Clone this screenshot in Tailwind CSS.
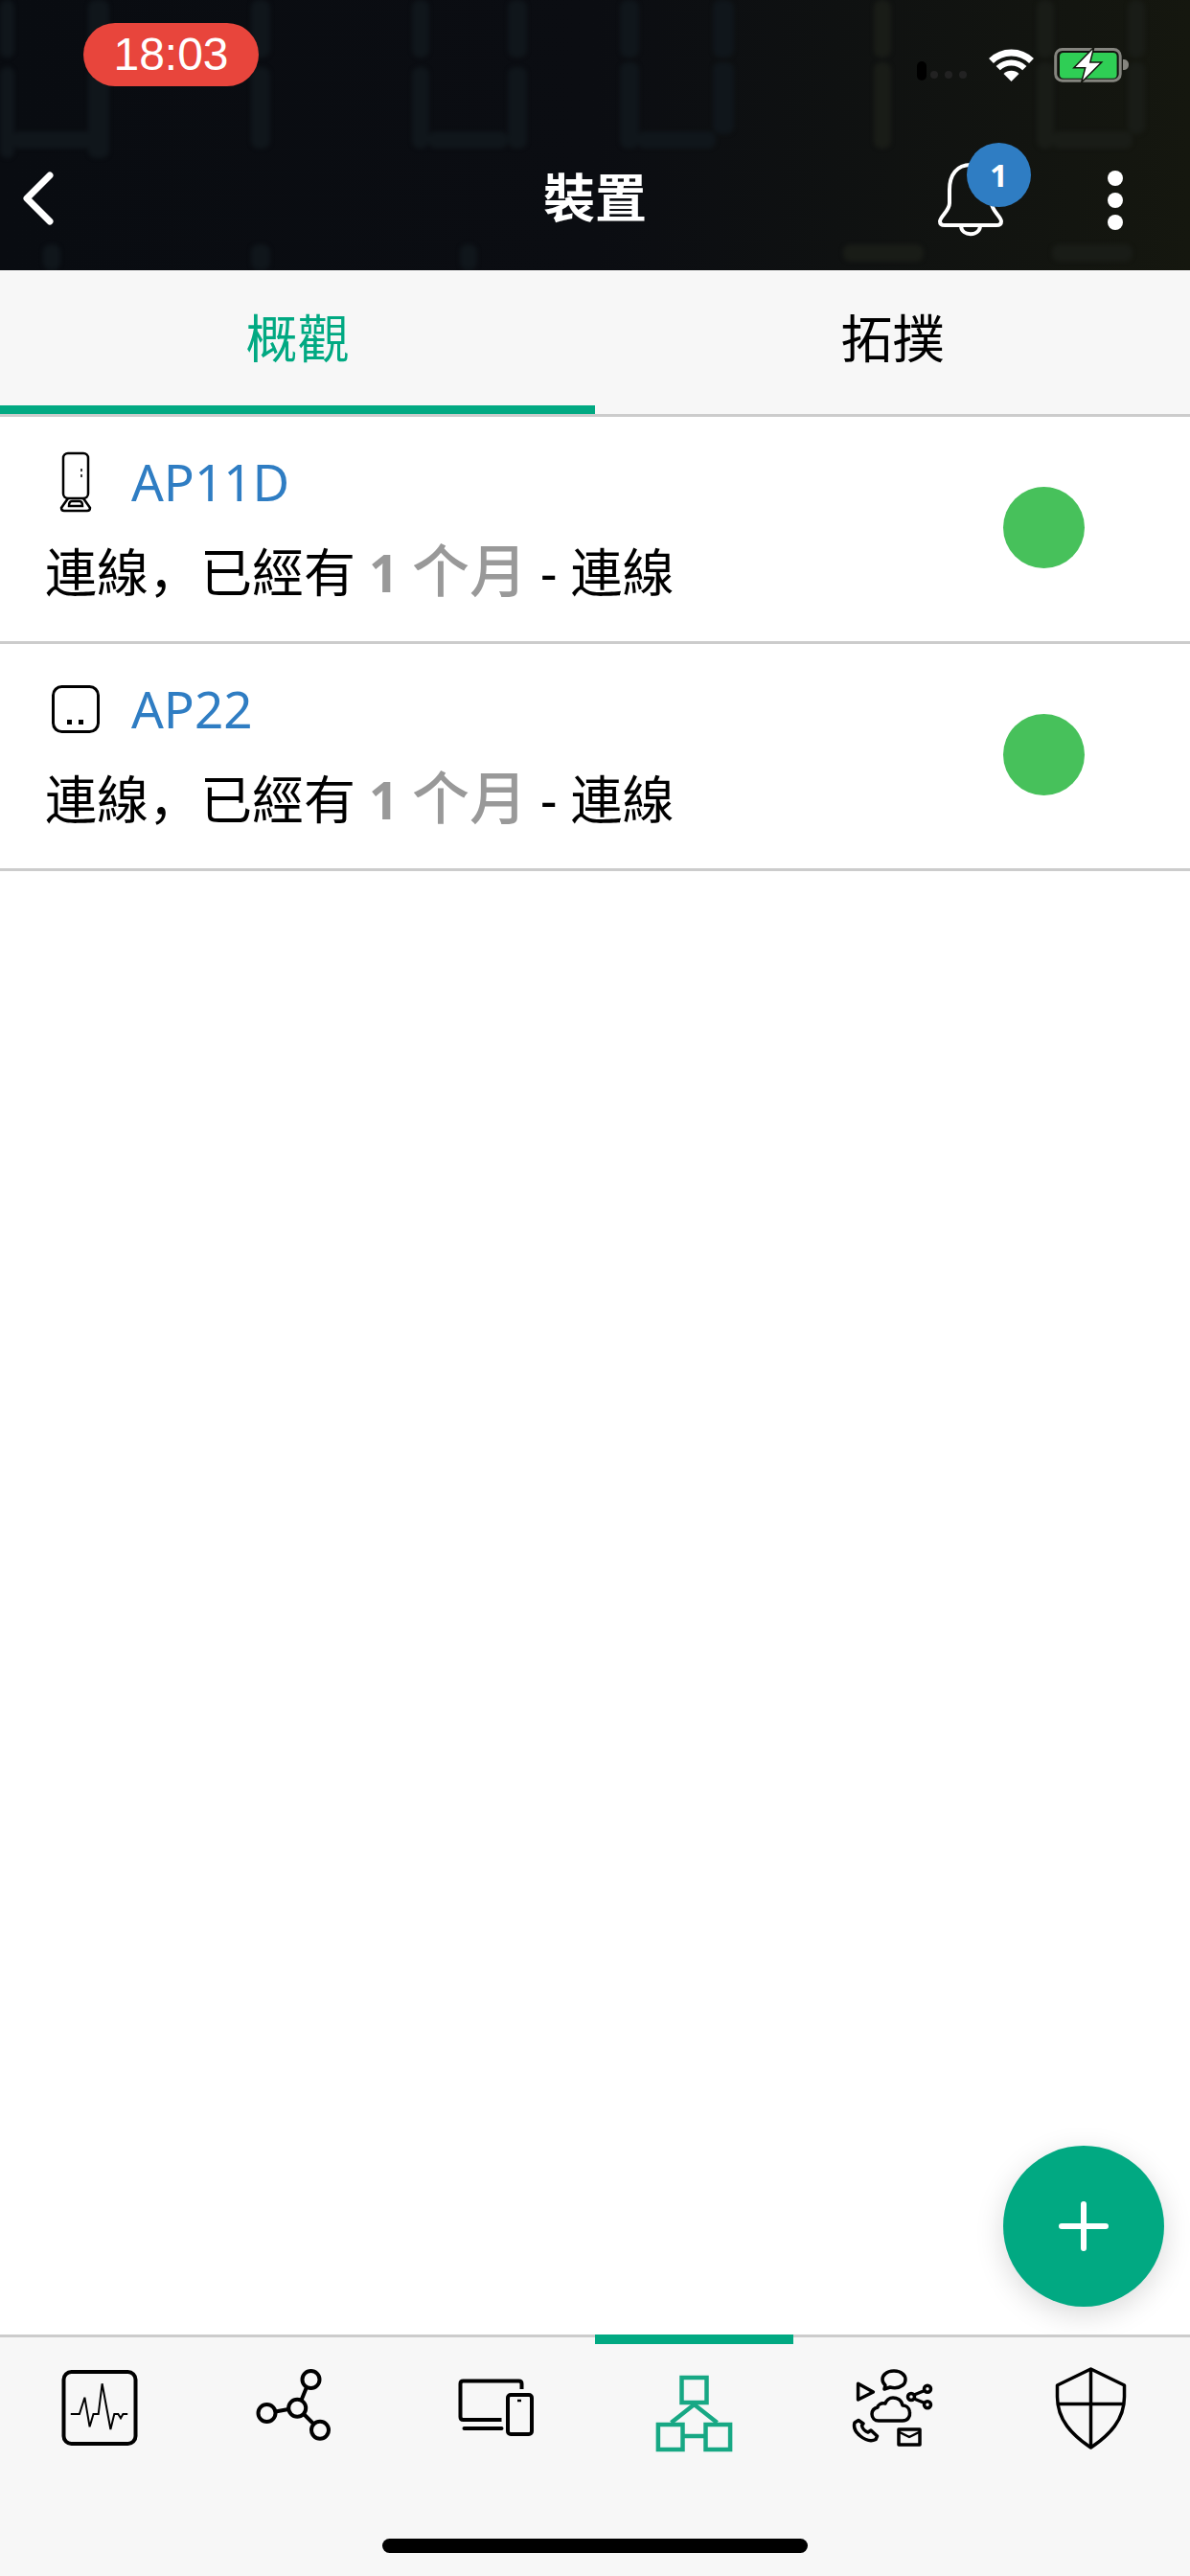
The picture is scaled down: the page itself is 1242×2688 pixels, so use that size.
<!DOCTYPE html>
<html lang="zh-CN">
<head>
<meta charset="UTF-8">
<meta name="viewport" content="width=device-width, initial-scale=1.0">
<title>裝置</title>
<script src="https://cdn.jsdelivr.net/npm/@tailwindcss/browser@4"></script>
</head>
<body class="bg-white font-['Noto_Sans','Noto_Sans_CJK_SC',sans-serif]">

<div class="relative flex flex-col w-[1242px] h-[2688px] overflow-hidden bg-white">

    <!-- Header -->
    <header class="relative h-[282px] shrink-0 overflow-hidden bg-gradient-to-r from-[#090c11] via-[#0b0d12] to-[#15170f] text-white">
        <!-- faint seven segment digits behind the header -->
        <svg class="absolute inset-0 blur-[2px]" width="1242" height="282" fill="#10161b">
            <rect x="0" y="0" width="15" height="60" rx="7"/><rect x="0" y="70" width="15" height="95" rx="7"/>
            <rect x="92" y="0" width="22" height="60" rx="8"/><rect x="92" y="70" width="22" height="95" rx="8"/>
            <rect x="262" y="0" width="20" height="60" rx="8"/><rect x="262" y="70" width="20" height="85" rx="8"/>
            <rect x="430" y="0" width="18" height="60" rx="8"/><rect x="430" y="70" width="18" height="85" rx="8"/>
            <rect x="530" y="0" width="20" height="60" rx="8"/><rect x="530" y="70" width="20" height="85" rx="8"/>
            <rect x="12" y="137" width="85" height="18" rx="8"/><rect x="447" y="137" width="83" height="18" rx="8"/>
            <rect x="45" y="255" width="18" height="27" rx="8"/><rect x="262" y="255" width="20" height="27" rx="8"/><rect x="480" y="255" width="18" height="27" rx="8"/>
            <rect x="647" y="0" width="20" height="60" rx="8"/><rect x="647" y="65" width="20" height="90" rx="8"/>
            <rect x="744" y="0" width="22" height="60" rx="8"/><rect x="744" y="65" width="22" height="75" rx="8"/>
            <rect x="665" y="137" width="82" height="18" rx="8"/>
            <g fill="#191c17">
                <rect x="912" y="0" width="18" height="60" rx="8"/><rect x="912" y="65" width="18" height="90" rx="8"/>
                <rect x="1082" y="0" width="18" height="60" rx="8"/><rect x="1082" y="65" width="18" height="90" rx="8"/>
                <rect x="1177" y="0" width="18" height="60" rx="8"/><rect x="1177" y="65" width="18" height="75" rx="8"/>
                <rect x="1098" y="137" width="84" height="18" rx="8"/>
                <rect x="880" y="255" width="84" height="18" rx="8"/><rect x="1098" y="255" width="84" height="18" rx="8"/>
            </g>
        </svg>

        <div class="relative flex flex-col h-full">
            <!-- Status bar -->
            <div class="flex items-start h-[130px] pt-[24px] pl-[87px] pr-[62px]">
                <div class="flex items-center justify-center w-[183px] h-[66px] rounded-full bg-[#e8453c] font-['Liberation_Sans',sans-serif] text-[48px] leading-none">18:03</div>
                <div class="flex items-center ml-auto mt-[22px]">
                    <svg width="55" height="22" class="mr-[18px] mt-[12px]">
                        <rect x="0" y="1" width="10" height="20" rx="5" fill="#000"/>
                        <circle cx="18" cy="15" r="4" fill="#222"/><circle cx="33" cy="15" r="4" fill="#222"/><circle cx="48" cy="15" r="4" fill="#222"/>
                    </svg>
                    <svg width="52" height="44" class="mr-[15px]" fill="none" stroke="#fff">
                        <path d="M4.500 17.500A30 30 0 0 1 46.500 17.500" stroke-width="7"/>
                        <path d="M11.700 25.200A19.500 19.500 0 0 1 39.300 25.200" stroke-width="6"/>
                        <path d="M25.500 39L17.500 31A11.300 11.300 0 0 1 33.500 31Z" fill="#fff" stroke="none"/>
                    </svg>
                    <svg width="83" height="44">
                        <rect x="4.700" y="5.500" width="67.500" height="32.700" rx="7" fill="none" stroke="#85857f" stroke-width="3"/>
                        <rect x="9" y="9" width="59.600" height="26.700" rx="4" fill="#2fce55"/>
                        <path d="M75 16C79 16 81 18 81 21.500C81 25 79 27 75 27Z" fill="#85857f"/>
                        <path d="M44.800 3.300L23.800 24.700H35.700L31.700 40L52.700 19H40.800Z" fill="#fff" stroke="#14160f" stroke-width="1.500"/>
                    </svg>
                </div>
            </div>

            <!-- Title row -->
            <div class="flex items-center h-[152px]">
                <div class="w-[300px] pl-[20px]">
                    <svg width="40" height="60" fill="none" stroke="#fff" stroke-width="7" stroke-linecap="round" stroke-linejoin="round" class="block">
                        <path d="M32 7L8 31L32 55"/>
                    </svg>
                </div>
                <h1 class="flex-1 text-center text-[54px] font-bold leading-none">裝置</h1>
                <div class="flex items-center justify-end w-[300px] pr-[70px]">
                    <div class="relative w-[68px] h-[80px] mr-[109px] mt-[4px]">
                        <svg width="68" height="80" fill="none" stroke="#fff" stroke-width="4">
                            <path d="M34 4C20 4 12 14 12 30V44C12 52 2 58 2 63C2 66 4 67 7 67H61C64 67 66 66 66 63C66 58 56 52 56 44V30C56 14 48 4 34 4Z"/>
                            <path d="M24 68C25 79 43 79 44 68"/>
                        </svg>
                        <div class="absolute left-[30px] top-[-19px] flex items-center justify-center w-[67px] h-[67px] rounded-full bg-[#2f7dc3] text-[33px] font-bold leading-none">1</div>
                    </div>
                    <div class="flex flex-col gap-[7px] mt-[6px]">
                        <span class="block w-[16px] h-[16px] rounded-full bg-white"></span>
                        <span class="block w-[16px] h-[16px] rounded-full bg-white"></span>
                        <span class="block w-[16px] h-[16px] rounded-full bg-white"></span>
                    </div>
                </div>
            </div>
        </div>
    </header>

    <!-- Tabs -->
    <div class="grid grid-cols-2 h-[153px] shrink-0 bg-[#f7f7f7] border-b-[3px] border-[#cccccc] text-[54px] leading-none">
        <div class="flex items-center justify-center border-b-[9px] border-[#01a982] text-[#01a982]">概觀</div>
        <div class="flex items-center justify-center border-b-[9px] border-transparent text-black">拓撲</div>
    </div>

    <!-- Device list -->
    <main class="relative flex-1">
        <div class="flex items-center justify-between h-[237px] pl-[47px] pr-[110px] border-b-[3px] border-[#cccccc]">
            <div class="flex flex-col gap-[18px] mb-[7px]">
                <div class="flex items-center h-[74px]">
                    <div class="flex justify-center w-[61px] mr-[28px] ml-[1px]">
                        <svg width="36" height="64" fill="none" stroke="#000" stroke-width="2.500">
                            <rect x="5" y="2" width="26" height="47" rx="5"/>
                            <path d="M10 49L3 59C3 61 4 62 6 62H30C32 62 33 61 33 59L26 49"/>
                            <path d="M11 57C11 53 12 52 14 52H22C24 52 25 53 25 57Z"/>
                            <path d="M24 18V21M24 24V27" stroke-width="1.500"/>
                        </svg>
                    </div>
                    <span class="text-[53px] leading-none text-[#2f7dc3]">AP11D</span>
                </div>
                <p class="h-[74px] text-[54px] leading-[74px] whitespace-nowrap text-black">連線，已經有 <span class="font-bold text-[#999999]">1</span> <span class="text-[60px] font-medium text-[#999999]">个月</span> - 連線</p>
            </div>
            <span class="block w-[85px] h-[85px] mb-[4px] rounded-full bg-[#47c15b]"></span>
        </div>
        <div class="flex items-center justify-between h-[237px] pl-[47px] pr-[110px] border-b-[3px] border-[#cccccc]">
            <div class="flex flex-col gap-[18px] mb-[7px]">
                <div class="flex items-center h-[74px]">
                    <div class="flex justify-center w-[61px] mr-[28px] ml-[1px]">
                        <svg width="50" height="50" fill="none" stroke="#000" stroke-width="3">
                            <rect x="1.500" y="1.500" width="47" height="47" rx="9"/>
                            <rect x="16" y="36" width="5" height="5" fill="#000" stroke="none"/>
                            <rect x="28" y="36" width="5" height="5" fill="#000" stroke="none"/>
                        </svg>
                    </div>
                    <span class="text-[53px] leading-none text-[#2f7dc3]">AP22</span>
                </div>
                <p class="h-[74px] text-[54px] leading-[74px] whitespace-nowrap text-black">連線，已經有 <span class="font-bold text-[#999999]">1</span> <span class="text-[60px] font-medium text-[#999999]">个月</span> - 連線</p>
            </div>
            <span class="block w-[85px] h-[85px] mb-[4px] rounded-full bg-[#47c15b]"></span>
        </div>

        <!-- Add button -->
        <button class="absolute right-[27px] bottom-[29px] flex items-center justify-center w-[168px] h-[168px] rounded-full bg-[#01a982] shadow-[0_8px_30px_rgba(0,0,0,0.15)]">
            <svg width="54" height="54" stroke="#fff" stroke-width="6" stroke-linecap="round">
                <path d="M27 4V50M4 27H50"/>
            </svg>
        </button>
    </main>

    <!-- Bottom nav -->
    <nav class="relative grid grid-cols-6 h-[252px] shrink-0 bg-[#f7f7f7] border-t-[3px] border-[#cccccc]">
        <div class="flex justify-center pt-[26px]">
            <svg width="90" height="96" class="block" fill="none" stroke="#000">
                <rect x="7.500" y="10" width="75" height="75" rx="8" stroke-width="4"/>
                <path d="M14.800 54H23.900L29.400 36.700L34.600 67.300L38.500 54H43.700L47.600 22.300L56.400 70L60.300 54H64.300L67 58.300L69.400 54H74.200" stroke-width="2"/>
            </svg>
        </div>
        <div class="flex justify-center pt-[26px]">
            <svg width="90" height="96" class="block" fill="none" stroke="#000" stroke-width="4">
                <circle cx="58.500" cy="18" r="9"/>
                <circle cx="12.500" cy="53" r="9"/>
                <circle cx="44.200" cy="47.700" r="9"/>
                <circle cx="68" cy="70.700" r="9"/>
                <path d="M54 26L48.500 39.500M21.500 51.500L35 49M51 54L61 64"/>
            </svg>
        </div>
        <div class="flex justify-center pt-[26px]">
            <svg width="90" height="96" class="block" fill="none" stroke="#000" stroke-width="4">
                <path d="M50.500 60H10.500Q7.500 60 7.500 57V22.500Q7.500 19.500 10.500 19.500H68.500Q71.500 19.500 71.500 22.500V28"/>
                <path d="M11.500 69H50.500" stroke-linecap="round"/>
                <rect x="57" y="34" width="25" height="41" rx="3"/>
                <path d="M67 40H71" stroke-width="2.500"/>
            </svg>
        </div>
        <div class="flex justify-center pt-[22px] -mt-[3px] border-t-[10px] border-[#01a982]">
            <svg width="90" height="96" class="block" fill="none" stroke="#17a884" stroke-width="4.500">
                <rect x="31.500" y="13" width="26" height="26"/>
                <rect x="6.900" y="62" width="25.600" height="26"/>
                <rect x="56.500" y="62" width="25.600" height="26"/>
                <path d="M20.500 60L44.500 41L68.500 60M32.500 74H56.500"/>
            </svg>
        </div>
        <div class="flex justify-center pt-[26px]">
            <svg width="90" height="96" class="block" fill="none" stroke="#000" stroke-width="3.500" stroke-linejoin="round">
                <path d="M37 24C33 20 33 15 37 12C41 8 51 8 55 12C59 15 59 21 55 24C51 27 46 27 42 26L36 28Z"/>
                <path d="M8.600 22.300L24.400 31L8.600 39Z"/>
                <circle cx="81" cy="27.700" r="3.500"/><circle cx="64" cy="36" r="3.500"/><circle cx="81" cy="44.300" r="3.500"/>
                <path d="M67 34L78 29.500M67 38L78 42.500"/>
                <path d="M30 61H55C61 61 63 56 62.500 52C62 47 58 45 55 45C54 39 49 37 45 37C41 37 38 40 37 43C32 42 29 45 29 47C25 48 23 51 23 54C23 58 26 61 30 61Z"/>
                <path d="M9 60.500L5 63C3.500 68 6 73 11 77C16 81 22 83 27 80.500L28.500 77L22 71L19 73C16 72 13 69 12.500 66L14 64Z"/>
                <rect x="51" y="70" width="22" height="16" stroke-width="3.500"/>
                <path d="M52 73L62 78L72 73" stroke-width="2.500"/>
            </svg>
        </div>
        <div class="flex justify-center pt-[26px]">
            <svg width="90" height="96" class="block" fill="none" stroke="#000" stroke-width="3.500" stroke-linejoin="round">
                <path d="M44.500 7L9.500 24V36C9.500 60 25 76 44.500 89C64 76 79.500 60 79.500 36V24Z"/>
                <path d="M44.500 7V89M10 43.500H79"/>
            </svg>
        </div>

        <!-- Home indicator -->
        <div class="absolute left-[399px] top-[210px] w-[444px] h-[15px] rounded-full bg-black"></div>
    </nav>
</div>

</body>
</html>
